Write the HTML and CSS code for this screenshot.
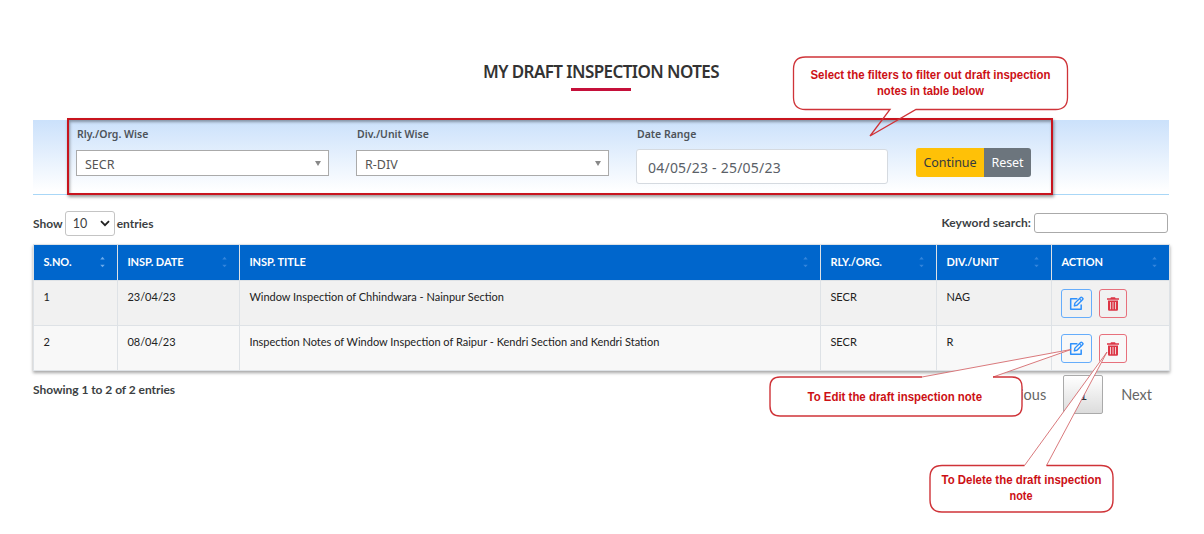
FILE: index.html
```html
<!DOCTYPE html>
<html lang="en">
<head>
<meta charset="utf-8">
<title>My Draft Inspection Notes</title>
<link rel="stylesheet" href="styles.css">
</head>
<body>
<svg class="defs" width="0" height="0">
  <symbol id="edit" viewBox="0 0 16 16">
    <path d="M9 3H1.8v11.2H13V9" fill="none" stroke="currentColor" stroke-width="1.6" stroke-linejoin="round"/>
    <path d="M5.700 10.600l.6-3L12.400 1.500q.7-.7 1.400 0l.8.8q.7.7 0 1.400L8.500 9.900z" fill="none" stroke="currentColor" stroke-width="1.500" stroke-linejoin="round"/>
    <path d="M11.100 2.900l2.200 2.200" stroke="currentColor" stroke-width="1.200"/>
  </symbol>
  <symbol id="trash" viewBox="0 0 12 14">
    <path fill="currentColor" fill-rule="evenodd" d="M4 .2h4l.6 1H12v1.500H0V1.200h3.400zM1 3.500h10V12.600q0 1.200-1.200 1.200H2.200Q1 13.800 1 12.600zM3 5v7.300h.8V5zM5.600 5v7.300h.8V5zM8.200 5v7.300h.8V5z"/>
  </symbol>
  <symbol id="sort" viewBox="0 0 5 12">
    <path class="up" d="M.3 3.500L2.500.8l2.200 2.700z"/>
    <path class="down" d="M.3 8.700l2.200 2.500 2.200-2.500z"/>
  </symbol>
</svg>
<main class="page">
  <header class="heading"><h1>MY DRAFT INSPECTION NOTES</h1><div class="rule"></div></header>

  <section class="filters">
    <div class="field"><label>Rly./Org. Wise</label><div class="select">SECR<i class="caret"></i></div></div>
    <div class="field"><label>Div./Unit Wise</label><div class="select">R-DIV<i class="caret"></i></div></div>
    <div class="field"><label>Date Range</label><div class="date">04/05/23 - 25/05/23</div></div>
    <div class="buttons"><button class="continue">Continue</button><button class="reset">Reset</button></div>
    <div class="highlight"></div>
  </section>

  <section class="controls">
    <div class="length">Show <span class="count">10<svg width="10" height="7" viewBox="0 0 10 7"><path d="M1 1.200l4 4 4-4" fill="none" stroke="#222" stroke-width="1.800"/></svg></span> entries</div>
    <div class="search">Keyword search:<input type="text" aria-label="Keyword search"></div>
  </section>

  <table class="notes">
    <colgroup><col class="c-no"><col class="c-date"><col class="c-title"><col class="c-org"><col class="c-div"><col class="c-action"></colgroup>
    <thead><tr>
      <th><div class="th">S.NO.<svg class="sort asc"><use href="#sort"/></svg></div></th>
      <th><div class="th">INSP. DATE<svg class="sort"><use href="#sort"/></svg></div></th>
      <th><div class="th">INSP. TITLE<svg class="sort"><use href="#sort"/></svg></div></th>
      <th><div class="th">RLY./ORG.<svg class="sort"><use href="#sort"/></svg></div></th>
      <th><div class="th">DIV./UNIT<svg class="sort"><use href="#sort"/></svg></div></th>
      <th><div class="th">ACTION<svg class="sort"><use href="#sort"/></svg></div></th>
    </tr></thead>
    <tbody>
      <tr><td>1</td><td>23/04/23</td><td>Window Inspection of Chhindwara - Nainpur Section</td><td>SECR</td><td>NAG</td>
        <td><div class="actions"><span class="act edit"><svg><use href="#edit"/></svg></span><span class="act del"><svg><use href="#trash"/></svg></span></div></td></tr>
      <tr><td>2</td><td>08/04/23</td><td>Inspection Notes of Window Inspection of Raipur - Kendri Section and Kendri Station</td><td>SECR</td><td>R</td>
        <td><div class="actions"><span class="act edit"><svg><use href="#edit"/></svg></span><span class="act del"><svg><use href="#trash"/></svg></span></div></td></tr>
    </tbody>
  </table>

  <footer class="foot">
    <div class="info">Showing 1 to 2 of 2 entries</div>
    <nav class="pager"><span class="prev">Previous</span><span class="current">1</span><span class="next">Next</span></nav>
  </footer>
</main>

<svg class="callouts" width="1204" height="534" viewBox="0 0 1204 534">
  <rect class="bubble-fill" x="793.500" y="57" width="274" height="52.500" rx="12"/>
  <path class="bubble" d="M805.500 57H1055.500Q1067.500 57 1067.500 69V97.500Q1067.500 109.500 1055.500 109.500H916L870 136L890 109.500H805.500Q793.500 109.500 793.500 97.500V69Q793.500 57 805.500 57Z"/>
  <path class="bubble-fill" d="M780 377H922L1052 353L1071 349.500L993 377H1012Q1022 377 1022 387V406Q1022 416 1012 416H780Q770 416 770 406V387Q770 377 780 377Z"/>
  <path class="tail" d="M922 377L1071 349.500L993 377"/>
  <path class="box" d="M922 377H780Q770 377 770 387V406Q770 416 780 416H1012Q1022 416 1022 406V387Q1022 377 1012 377H993"/>
  <path class="bubble-fill" d="M942 465.500H1024.500L1107 352L1046.500 465.500H1101Q1113 465.500 1113 477.500V500Q1113 512 1101 512H942Q930 512 930 500V477.500Q930 465.500 942 465.500Z"/>
  <path class="tail" d="M1024.500 465.500L1107 352L1046.500 465.500"/>
  <path class="box" d="M1024.500 465.500H942Q930 465.500 930 477.500V500Q930 512 942 512H1101Q1113 512 1113 500V477.500Q1113 465.500 1101 465.500H1046.500"/>
  <g class="note">
    <text x="810.500" y="79" textLength="240" lengthAdjust="spacingAndGlyphs">Select the filters to filter out draft inspection</text>
    <text x="877" y="94.500" textLength="107" lengthAdjust="spacingAndGlyphs">notes in table below</text>
    <text x="807.500" y="401.300" textLength="174.500" lengthAdjust="spacingAndGlyphs">To Edit the draft inspection note</text>
    <text x="941.500" y="484.300" textLength="160" lengthAdjust="spacingAndGlyphs">To Delete the draft inspection</text>
    <text x="1009.500" y="500" textLength="23" lengthAdjust="spacingAndGlyphs">note</text>
  </g>
</svg>
</body>
</html>
```
FILE: styles.css
```css
* { box-sizing: border-box; }
body { margin: 0; background: #fff; color: #3c3f43; font-family: Lato, sans-serif; font-size: 12px; }
.defs { position: absolute; }
.page { width: 1204px; height: 534px; padding: 60px 35px 0 33px; overflow: hidden; }
.heading { height: 60px; display: flex; flex-direction: column; align-items: center; }
h1 { margin: 0; font: 600 17px/24px "Noto Sans", sans-serif; letter-spacing: -.58px; color: #333; }
.rule { width: 60px; height: 3px; margin-top: 4px; background: #c5103a; }

.filters { position: relative; display: flex; height: 75px; padding: 0 0 0 43px; border-bottom: 1px solid #a9d7f7; background: linear-gradient(#cbe1fb, #fff 96%); font-family: "Noto Sans", sans-serif; }
.field { width: 253px; margin-right: 27px; }
.field label { display: block; margin: 7px 0 8px 1px; height: 15px; font: 600 10.500px/15px "Noto Sans", sans-serif; color: #4d5359; }
.select { display: flex; align-items: center; justify-content: space-between; height: 26px; padding: 2px 7px 0 8px; border: 1px solid #aaa; background: #fff; font-size: 12.500px; color: #555; }
.caret { border: 3.500px solid transparent; border-top: 5px solid #888; border-bottom: 0; margin-bottom: 2px; }
.date { width: 252px; height: 35px; margin-top: -1px; padding: 2px 11px 0; border: 1px solid #d5dae0; border-radius: 3px; background: #fff; font-size: 14px; letter-spacing: .22px; line-height: 32px; color: #5a6067; }
.buttons { display: flex; height: 29px; margin: 28px 0 0; }
button { border: 0; padding: 0; font: 12.500px "Noto Sans", sans-serif; letter-spacing: -.05px; }
.continue { width: 68px; border-radius: 3px 0 0 3px; background: #ffc107; color: #343a40; }
.reset { width: 47px; border-radius: 0 3px 3px 0; background: #6c757d; color: #fff; }
.highlight { position: absolute; left: 34px; top: -2px; width: 986px; height: 77px; border: 2px solid #c8141e; box-shadow: 1px 2px 3px rgba(0,0,0,.4), inset 1px 2px 3px rgba(0,0,0,.35); }

.controls { display: flex; justify-content: space-between; height: 49px; padding-top: 16px; font-weight: 700; }
.length, .search { display: flex; align-items: center; height: 24px; line-height: 14px; }
.length { padding-bottom: 1px; margin-top: 1px; }
.search { letter-spacing: .07px; }
.count { display: flex; align-items: center; justify-content: space-between; flex: none; width: 50px; height: 25px; margin: 0 2px; padding: 0 4px 0 7px; border: 1px solid #c4c4c4; border-radius: 3px; font-weight: 400; font-size: 12.500px; }
.search input { width: 134px; height: 20px; margin: 0 1px 0 3px; padding: 0; border: 1px solid #aaa; border-radius: 3px; }

.notes { width: 1136px; table-layout: fixed; border-collapse: collapse; background: #fff; box-shadow: 0 2px 3px rgba(0,0,0,.35); color: #222; font-size: 11px; }
.c-no { width: 84px; } .c-date { width: 122px; } .c-title { width: 581px; } .c-org { width: 116px; } .c-div { width: 115px; } .c-action { width: 118px; }
th, td { padding: 0 0 0 9.400px; text-align: left; vertical-align: top; border: 1px solid #dee2e6; }
th { height: 36px; background: #06c; color: #fff; font-weight: 700; letter-spacing: -.06px; }
.th { display: flex; align-items: center; justify-content: space-between; height: 35px; padding: 0 12px 2px 0; }
.sort { width: 5px; height: 12px; fill: #3385dc; }
.asc { fill: #6dacec; }
td { height: 45px; padding-top: 8px; line-height: 16px; }
tbody tr:nth-child(1) { background: #f1f1f1; }
tbody tr:nth-child(2) { background: #f8f8f8; }
.actions { display: flex; gap: 7px; }
.act { display: flex; align-items: center; justify-content: center; height: 29px; border: 1px solid; border-radius: 3px; }
.edit { width: 31px; color: #2f91fc; border-color: #66adfb; }
.del { width: 28px; color: #dc3545; border-color: #e7707c; }
.edit svg { width: 15px; height: 15px; }
.del svg { width: 12px; height: 14px; }

.foot { display: flex; justify-content: space-between; }
.info { padding-top: 11px; line-height: 16px; font-weight: 700; letter-spacing: -.04px; }
.pager { display: flex; align-items: center; margin-top: 4px; font-size: 14.500px; color: #666; }
.current { display: flex; align-items: center; justify-content: center; width: 40px; height: 39px; margin: 0 18px 0 17px; border: 1px solid #aaa; border-radius: 2px; background: linear-gradient(#fff, #dcdcdc); color: #333; }
.next { margin-right: 17px; }

.callouts { position: absolute; left: 0; top: 0; }
.bubble { fill: none; stroke: #cf3338; stroke-width: 1.3; }
.bubble-fill { fill: #fff; }
.tail { fill: none; stroke: #d56a6d; stroke-width: .9; }
.box { fill: none; stroke: #cf3338; stroke-width: 1.4; }
.note { fill: #cc1015; font: 700 12px "Liberation Sans", Arial, sans-serif; }
```
